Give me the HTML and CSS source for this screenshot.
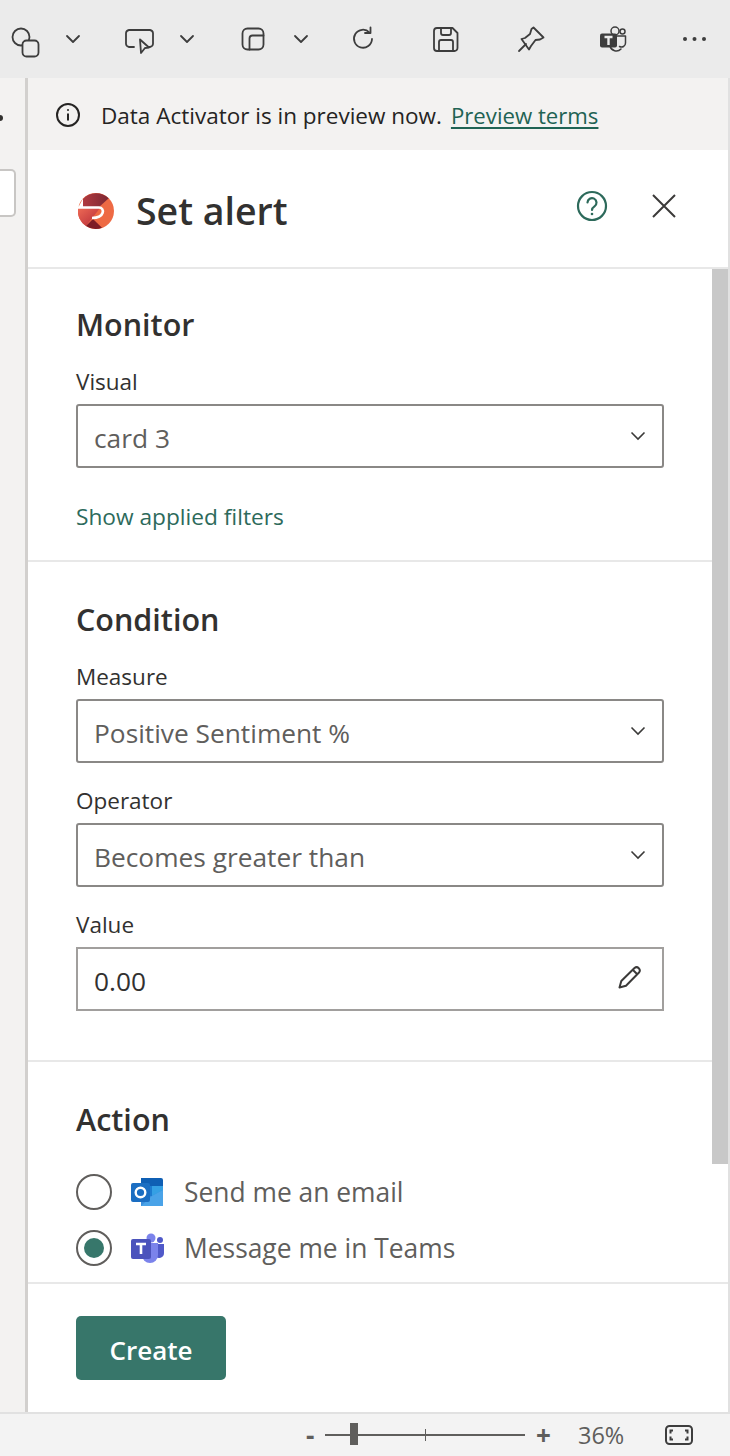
FILE: index.html
```html
<!DOCTYPE html>
<html lang="en">
<head>
  <meta charset="utf-8">
  <title>Set alert</title>
  <link rel="stylesheet" href="styles.css">
</head>
<body>
<div class="app">
  <div class="toolbar">
    <div class="split">
      <svg class="tool" viewBox="0 0 32 32"><circle cx="12" cy="14" r="8.5"/><rect x="13.5" y="17.5" width="16" height="16" rx="4" class="fill-bar"/></svg>
      <svg class="tool" viewBox="0 0 32 32"><path d="M10 13l6 6 6-6"/></svg>
    </div>
    <div class="split">
      <svg class="tool" viewBox="0 0 32 32"><path d="M11 24H6a3.500 3.500 0 0 1-3-3V10a3.500 3.500 0 0 1 3-3h21a3.500 3.500 0 0 1 3 3v11a3.500 3.500 0 0 1-3 3h-1"/><path d="M17 16.500l9 8-4 .5-4 5z" class="fill-bar"/></svg>
      <svg class="tool" viewBox="0 0 32 32"><path d="M10 13l6 6 6-6"/></svg>
    </div>
    <div class="split">
      <svg class="tool" viewBox="0 0 32 32"><rect x="5.500" y="5.500" width="21" height="21" rx="5"/><path d="M12.500 26.500v-11a3 3 0 0 1 3-3h11"/></svg>
      <svg class="tool" viewBox="0 0 32 32"><path d="M10 13l6 6 6-6"/></svg>
    </div>
    <div class="tools-right">
      <svg class="tool" viewBox="0 0 32 32"><path d="M22.500 9.500a9 9 0 1 0 2.500 6.500"/><path d="M23.500 4.500v5.500h-5.500"/></svg>
      <svg class="tool" viewBox="0 0 32 32"><path d="M7 5h15.500l5 5v15a3 3 0 0 1-3 3H7a3 3 0 0 1-3-3V8a3 3 0 0 1 3-3z"/><path d="M11 5v5a2 2 0 0 0 2 2h6a2 2 0 0 0 2-2V5"/><path d="M9 28V19a2 2 0 0 1 2-2h10a2 2 0 0 1 2 2v9"/></svg>
      <svg class="tool" viewBox="0 0 32 32"><path d="M20.500 4.500l10 10-3.500 2-4.500.5-4.500 6-2 3.500-7.500-10.500 3.500-1 5-4 1.500-5z"/><path d="M13 21l-7 7"/></svg>
      <svg class="tool" viewBox="0 0 32 32"><circle cx="26.500" cy="8.500" r="2.500" class="thin"/><circle cx="19" cy="8" r="4" class="thin"/><path d="M21 13h8.500v7a4 4 0 0 1-6 3.500" class="thin"/><path d="M14 20v3a6.500 6.500 0 0 0 11 3" class="thin"/><rect x="4" y="10.500" width="17" height="14" rx="2" class="solid"/><path d="M8.500 14h8M12.500 14v8" class="letter"/></svg>
      <svg class="tool" viewBox="0 0 32 32"><circle cx="6" cy="16" r="2" class="solid"/><circle cx="15.500" cy="16" r="2" class="solid"/><circle cx="25" cy="16" r="2" class="solid"/></svg>
    </div>
  </div>

  <div class="middle">
    <div class="sliver">
      <span class="sliver-arrow"></span>
      <div class="sliver-box"></div>
    </div>
    <div class="panel">
      <div class="banner">
        <svg class="info-icon" viewBox="0 0 24 24"><circle cx="12" cy="12" r="11"/><path d="M12 10.500v7"/><circle cx="12" cy="7" r="1" class="dot"/></svg>
        <span>Data Activator is in preview now.</span>
        <a href="#" class="link-underline">Preview terms</a>
      </div>

      <div class="head">
        <svg class="logo" viewBox="0 0 36 36">
          <defs>
            <linearGradient id="lg1" x1="0" y1="0" x2="1" y2="0"><stop offset="0" stop-color="#b03a40"/><stop offset="1" stop-color="#7d2833"/></linearGradient>
            <linearGradient id="lg2" x1="0" y1="0" x2="1" y2="1"><stop offset="0" stop-color="#ee6a55"/><stop offset="1" stop-color="#b42a38"/></linearGradient>
          </defs>
          <circle cx="18" cy="18" r="18" fill="#ee6a44"/>
          <path d="M5 13V6A18 18 0 0 1 30.700 5.300L20 15H5z" fill="url(#lg1)"/>
          <path d="M5 5.500L1 13V15H5z" fill="#fff"/>
          <path d="M0 15H22L8 33A18 18 0 0 1 0 15z" fill="url(#lg2)"/>
          <path d="M8 33L15 26 24 34.800A18 18 0 0 1 8 33z" fill="#7e1c26"/>
          <path d="M0 14.500H21C27 14.500 27 25 14 25" fill="none" stroke="#fff" stroke-width="2.600"/>
        </svg>
        <h1>Set alert</h1>
        <svg class="help-icon" viewBox="0 0 32 32"><circle cx="16" cy="16" r="14"/><path d="M11.500 12.500a4.500 4.500 0 1 1 7 3.800c-1.500 1-2.500 1.700-2.500 3.700"/><circle cx="16" cy="24" r="1.300" class="dot"/></svg>
        <svg class="close-icon" viewBox="0 0 24 24"><path d="M1 1l22 22M23 1L1 23"/></svg>
      </div>

      <div class="body">
        <div class="scroller">
          <section class="section section-monitor">
            <h2>Monitor</h2>
            <label class="field-label">Visual</label>
            <div class="field">
              <span>card 3</span>
              <svg class="chev" viewBox="0 0 16 10"><path d="M1.500 1.500L8 8l6.500-6.500"/></svg>
            </div>
            <a href="#" class="link-plain">Show applied filters</a>
          </section>

          <section class="section section-condition">
            <h2>Condition</h2>
            <label class="field-label">Measure</label>
            <div class="field">
              <span>Positive Sentiment %</span>
              <svg class="chev" viewBox="0 0 16 10"><path d="M1.500 1.500L8 8l6.500-6.500"/></svg>
            </div>
            <label class="field-label field-label-next">Operator</label>
            <div class="field">
              <span>Becomes greater than</span>
              <svg class="chev" viewBox="0 0 16 10"><path d="M1.500 1.500L8 8l6.500-6.500"/></svg>
            </div>
            <label class="field-label field-label-next">Value</label>
            <div class="field field-value">
              <span>0.00</span>
              <svg class="pencil" viewBox="0 0 24 24"><path d="M1.500 22.500l1.800-6.500L16.500 3a3.200 3.200 0 0 1 4.500 4.500L8 20.700z"/><path d="M15 5l4.500 4.500"/></svg>
            </div>
          </section>

          <section class="section section-action">
            <h2>Action</h2>
            <div class="option">
              <span class="radio"></span>
              <svg class="app-icon" viewBox="0 0 34 30">
                <path d="M10 1h20a2 2 0 0 1 2 2v6H10z" fill="#0f5fb4"/>
                <rect x="10" y="9" width="11" height="10" fill="#1d7bd0"/>
                <rect x="21" y="9" width="11" height="10" fill="#35a0e4"/>
                <path d="M10 19l11 0 11-6v15a1 1 0 0 1-1 1H10z" fill="#3b8edc"/>
                <path d="M21 19l11-6v16H10z" fill="#4aa3e8"/>
                <rect x="0" y="6" width="19" height="19" rx="2" fill="#1b6ec2"/>
                <circle cx="9.500" cy="15.500" r="4.800" fill="none" stroke="#fff" stroke-width="2.400"/>
              </svg>
              <span class="option-text">Send me an email</span>
            </div>
            <div class="option">
              <span class="radio radio-on"></span>
              <svg class="app-icon app-icon-teams" viewBox="0 0 34 30">
                <circle cx="29" cy="7" r="3" fill="#5059c9"/>
                <path d="M23 11h10v9a5 5 0 0 1-9 3z" fill="#5059c9"/>
                <circle cx="20" cy="5" r="4.500" fill="#7b83eb"/>
                <path d="M11 10h16v12a8 8 0 0 1-16 0z" fill="#7b83eb"/>
                <rect x="0" y="6" width="20" height="20" rx="2" fill="#4b53bc"/>
                <path d="M5 11h10M10 11v10" stroke="#fff" stroke-width="2.600" fill="none"/>
              </svg>
              <span class="option-text">Message me in Teams</span>
            </div>
          </section>
        </div>
        <div class="scrollbar"><div class="scrollbar-thumb"></div></div>
      </div>

      <div class="foot">
        <button class="create">Create</button>
      </div>
    </div>
  </div>

  <div class="statusbar">
    <span class="zoom-btn">-</span>
    <div class="slider"><span class="slider-thumb"></span><span class="slider-tick"></span></div>
    <span class="zoom-btn zoom-plus">+</span>
    <span class="zoom-value">36%</span>
    <svg class="fit-icon" viewBox="0 0 28 20"><rect x="1" y="1" width="26" height="18" rx="3.500"/><path d="M8 5.500H5.500v3M20 5.500h2.500v3M8 14.500H5.500v-3M20 14.500h2.500v-3"/></svg>
  </div>
</div>
</body>
</html>
```

FILE: styles.css
```css
html {
  box-sizing: border-box;
}

*, *:before, *:after {
  box-sizing: inherit;
}

body {
  margin: 0;
  font-family: "Open Sans", "Noto Sans", sans-serif;
  color: #323130;
  background: #fff;
  overflow: hidden;
}

svg {
  display: block;
  flex: none;
  fill: none;
}

.app {
  display: flex;
  flex-direction: column;
  height: 1456px;
}

/* top toolbar */
.toolbar {
  display: flex;
  align-items: center;
  flex: none;
  height: 78px;
  padding-left: 9px;
  background: #ebebeb;
}

.split {
  display: flex;
  gap: 16px;
}

.split + .split {
  margin-left: 34px;
}

.tools-right {
  display: flex;
  gap: 51px;
  margin-left: 30px;
}

.tool {
  width: 32px;
  height: 32px;
  overflow: visible;
  stroke: #3d3d3d;
  stroke-width: 1.800;
  stroke-linejoin: round;
  stroke-linecap: round;
}

.tool .fill-bar {
  fill: #ebebeb;
}

.tool .thin {
  stroke-width: 1.500;
}

.tool .solid {
  fill: #3d3d3d;
  stroke: none;
}

.tool .letter {
  stroke: #ebebeb;
  stroke-width: 2.400;
  stroke-linecap: butt;
}

/* middle */
.middle {
  display: flex;
  flex: 1;
  min-height: 0;
}

.sliver {
  flex: none;
  width: 28px;
  padding-top: 37px;
  background: #f3f2f1;
  border-right: 3px solid #d2d0ce;
}

.sliver-arrow {
  display: block;
  width: 3px;
  height: 6px;
  background: #323130;
  border-radius: 0 3px 3px 0;
}

.sliver-box {
  width: 16px;
  height: 48px;
  margin-top: 48px;
  background: #fff;
  border: 2px solid #c8c6c4;
  border-left: 0;
  border-radius: 0 5px 5px 0;
}

.panel {
  display: flex;
  flex-direction: column;
  flex: 1;
  min-width: 0;
  border-right: 2px solid #e1e1e1;
}

.banner {
  display: flex;
  align-items: center;
  flex: none;
  height: 72px;
  padding-left: 28px;
  padding-top: 2px;
  background: #f3f2f1;
  font-size: 22.500px;
  color: #252423;
}

.info-icon {
  width: 24px;
  height: 24px;
  margin-right: 21px;
  stroke: #252423;
  stroke-width: 2;
}

.info-icon .dot {
  fill: #252423;
  stroke: none;
}

.link-underline {
  margin-left: 9px;
  font-size: 22.200px;
  color: #1f6354;
  text-decoration: underline;
  text-underline-offset: 3px;
}

.head {
  display: flex;
  align-items: center;
  flex: none;
  height: 119px;
  padding-left: 50px;
  padding-top: 4px;
  border-bottom: 2px solid #e8e8e8;
}

.logo {
  width: 36px;
  height: 36px;
  margin-right: 22px;
}

h1 {
  margin: 0;
  font-size: 37.500px;
  font-weight: 600;
  line-height: 48px;
}

.help-icon {
  width: 32px;
  height: 32px;
  margin-left: auto;
  margin-top: -10px;
  stroke: #2d6a5b;
  stroke-width: 2.200;
  stroke-linecap: round;
}

.help-icon .dot {
  fill: #2d6a5b;
  stroke: none;
}

.close-icon {
  width: 24px;
  height: 24px;
  margin-left: 44px;
  margin-right: 52px;
  margin-top: -10px;
  stroke: #3b3a39;
  stroke-width: 2;
}

/* scrolling body */
.body {
  display: flex;
  flex: 1;
  min-height: 0;
}

.scroller {
  flex: 1;
  min-width: 0;
  overflow: hidden;
}

.scrollbar {
  flex: none;
  width: 16px;
}

.scrollbar-thumb {
  height: 895px;
  background: #c8c8c8;
}

.section {
  padding: 36px 48px 27px;
  border-bottom: 2px solid #e8e8e8;
}

.section-condition {
  padding-top: 38px;
  padding-bottom: 49px;
}

.section-action {
  padding-top: 38px;
  padding-bottom: 0;
  border-bottom: 0;
}

h2 {
  margin: 0;
  font-size: 30.500px;
  font-weight: 600;
  line-height: 38px;
}

.field-label {
  display: block;
  margin-top: 23px;
  margin-bottom: 6px;
  font-size: 22.500px;
  line-height: 32px;
}

.field-label-next {
  margin-top: 22px;
}

.field {
  display: flex;
  align-items: center;
  justify-content: space-between;
  height: 64px;
  padding: 3px 16px 0;
  border: 2px solid #8a8886;
  border-radius: 3px;
  font-size: 26.300px;
  color: #605e5c;
}

.field-value {
  border-radius: 0;
  border-color: #a19f9d;
  color: #323130;
}

.chev {
  width: 16px;
  height: 10px;
  margin-top: -3px;
  stroke: #3b3a39;
  stroke-width: 1.600;
}

.pencil {
  width: 24px;
  height: 24px;
  margin-right: 4px;
  margin-top: -7px;
  stroke: #3b3a39;
  stroke-width: 2;
  stroke-linejoin: round;
}

.link-plain {
  display: block;
  margin-top: 33px;
  color: #2d6a5b;
  font-size: 22.700px;
  line-height: 32px;
  text-decoration: none;
}

.option {
  display: flex;
  align-items: center;
  height: 56px;
  font-size: 26.400px;
  color: #605e5c;
}

.section-action h2 {
  margin-bottom: 26px;
}

.radio {
  flex: none;
  position: relative;
  width: 36px;
  height: 36px;
  margin-right: 19px;
  border: 2px solid #605e5c;
  border-radius: 50%;
}

.radio-on:after {
  content: "";
  position: absolute;
  inset: 6px;
  border-radius: 50%;
  background: #37776b;
}

.app-icon {
  width: 34px;
  height: 30px;
  margin-right: 19px;
  margin-top: -1px;
}

/* footer */
.foot {
  flex: none;
  height: 130px;
  padding: 32px 48px 0;
  border-top: 2px solid #e8e8e8;
}

.create {
  display: block;
  width: 150px;
  height: 64px;
  padding: 3px 0 0;
  border: 0;
  border-radius: 5px;
  background: #37766a;
  color: #fff;
  font-family: inherit;
  font-size: 26px;
  font-weight: 600;
}

/* status bar */
.statusbar {
  display: flex;
  align-items: center;
  flex: none;
  height: 44px;
  padding-left: 306px;
  background: #f3f3f3;
  border-top: 2px solid #e1e1e1;
  color: #5f5e5c;
}

.zoom-btn {
  width: 8px;
  font-size: 26px;
  font-weight: 700;
  line-height: 1;
}

.slider {
  position: relative;
  width: 200px;
  height: 2px;
  margin: 0 11px;
  background: #5f5e5c;
}

.slider-thumb {
  position: absolute;
  left: 25px;
  top: -11px;
  width: 8px;
  height: 22px;
  background: #5f5e5c;
}

.slider-tick {
  position: absolute;
  left: 100px;
  top: -5px;
  width: 1px;
  height: 12px;
  background: #5f5e5c;
}

.zoom-plus {
  width: 16px;
}

.zoom-value {
  margin-left: 26px;
  font-size: 23.500px;
}

.fit-icon {
  width: 28px;
  height: 20px;
  margin-left: 41px;
  stroke: #3d3d3d;
  stroke-width: 2;
}
```
